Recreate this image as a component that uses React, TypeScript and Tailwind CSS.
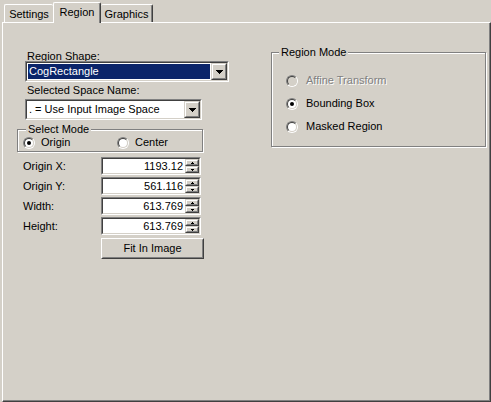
import React from 'react';

function Sunken({ className, children }: { className?: string; children?: React.ReactNode }) {
  return (
    <div className={`border border-t-[#808080] border-l-[#808080] border-b-white border-r-white ${className ?? ''}`}>
      <div className="flex h-full w-full border border-t-[#404040] border-l-[#404040] border-b-[#d4d0c8] border-r-[#d4d0c8]">
        {children}
      </div>
    </div>
  );
}

function Raised({ className, children }: { className?: string; children?: React.ReactNode }) {
  return (
    <div className={`border border-t-[#d4d0c8] border-l-[#d4d0c8] border-b-[#404040] border-r-[#404040] bg-[#d4d0c8] ${className ?? ''}`}>
      <div className="flex h-full w-full items-center justify-center border border-t-white border-l-white border-b-[#808080] border-r-[#808080]">
        {children}
      </div>
    </div>
  );
}

function DownArrow() {
  return (
    <svg width="7" height="4" viewBox="0 0 7 4" shapeRendering="crispEdges">
      <rect x="0" y="0" width="7" height="1" fill="#000" />
      <rect x="1" y="1" width="5" height="1" fill="#000" />
      <rect x="2" y="2" width="3" height="1" fill="#000" />
      <rect x="3" y="3" width="1" height="1" fill="#000" />
    </svg>
  );
}

function SmallArrow({ up }: { up?: boolean }) {
  return (
    <svg width="3" height="2" viewBox="0 0 3 2" shapeRendering="crispEdges">
      <rect x="1" y={up ? 0 : 1} width="1" height="1" fill="#000" />
      <rect x="0" y={up ? 1 : 0} width="3" height="1" fill="#000" />
    </svg>
  );
}

function Combo({ text, selected, className }: { text: string; selected?: boolean; className?: string }) {
  return (
    <Sunken className={`h-[21px] ${className ?? ''}`}>
      <div className="flex-1 bg-white p-[1px]">
        <div className={`h-full pl-[1px] leading-[15px] ${selected ? 'bg-[#0a246a] text-white' : ''}`}>{text}</div>
      </div>
      <Raised className="h-full w-[16px]">
        <DownArrow />
      </Raised>
    </Sunken>
  );
}

function Radio({ checked, disabled }: { checked?: boolean; disabled?: boolean }) {
  return (
    <span className="block h-[12px] w-[12px] shrink-0 rounded-full border border-t-[#808080] border-l-[#808080] border-b-white border-r-white">
      <span
        className={`flex h-full w-full items-center justify-center rounded-full border border-t-[#404040] border-l-[#404040] border-b-[#d4d0c8] border-r-[#d4d0c8] ${disabled ? 'bg-[#d4d0c8]' : 'bg-white'}`}
      >
        {checked && <span className="block h-[4px] w-[4px] rounded-full bg-black" />}
      </span>
    </span>
  );
}

function NumberRow({ label, value }: { label: string; value: string }) {
  return (
    <div className="flex h-[18px] items-center">
      <div className="w-[84px] pl-[6px]">{label}</div>
      <Sunken className="h-[18px] w-[100px]">
        <div className="flex-1 bg-white pr-[2px] text-right leading-[14px]">{value}</div>
        <div className="flex w-[14px] flex-col">
          <Raised className="h-[7px] w-full">
            <SmallArrow up />
          </Raised>
          <Raised className="h-[7px] w-full">
            <SmallArrow />
          </Raised>
        </div>
      </Sunken>
    </div>
  );
}

export default function App() {
  return (
    <div className="h-[402px] w-[491px] overflow-hidden bg-[#d4d0c8] font-['Liberation_Sans',Arial,sans-serif] text-[11px] leading-[13px] text-black">
      {/* tabs */}
      <div className="flex h-[22px] items-end pl-[2px]">
        <div className="ml-[2px] h-[18px] w-[49px] rounded-t-[2px] border-l border-t border-white pt-[3px] text-center">
          Settings
        </div>
        <div className="relative z-10 mb-[-1px] h-[21px] w-[48px] rounded-t-[2px] border-l border-t border-r border-l-white border-t-white border-r-[#404040] bg-[#d4d0c8] pt-[3px] text-center shadow-[inset_-1px_0_0_#808080]">
          Region
        </div>
        <div className="h-[18px] w-[52px] rounded-t-[2px] border-t border-r border-t-white border-r-[#404040] pt-[3px] text-center shadow-[inset_-1px_0_0_#808080]">
          Graphics
        </div>
      </div>

      {/* tab page */}
      <div className="ml-[2px] flex h-[380px] w-[489px] border border-t-white border-l-white border-b-[#404040] border-r-[#404040] shadow-[inset_-1px_-1px_0_#808080]">
        <div className="flex w-[202px] flex-col pl-[14px] pt-[27px]">
          <div className="pl-[10px]">Region Shape:</div>
          <Combo text="CogRectangle" selected className="ml-[8px] mt-[-2px] w-[204px]" />
          <div className="mt-[2px] pl-[10px]">Selected Space Name:</div>
          <Combo text=". = Use Input Image Space" className="ml-[8px] mt-[2px] w-[177px]" />

          <fieldset className="mt-[3px] w-[186px] border border-[#808080] shadow-[inset_1px_1px_0_#fff,1px_1px_0_#fff]">
            <legend className="ml-[8px] bg-[#d4d0c8] px-[2px]">Select Mode</legend>
            <div className="flex h-[13px] items-center pb-0 pl-[5px]">
              <div className="flex w-[94px] items-center gap-[6px]">
                <Radio checked />
                <span>Origin</span>
              </div>
              <div className="flex items-center gap-[6px]">
                <Radio />
                <span>Center</span>
              </div>
            </div>
            <div className="h-[2px]" />
          </fieldset>

          <div className="mt-[5px] flex flex-col gap-[2px]">
            <NumberRow label="Origin X:" value="1193.12" />
            <NumberRow label="Origin Y:" value="561.116" />
            <NumberRow label="Width:" value="613.769" />
            <NumberRow label="Height:" value="613.769" />
          </div>

          <div className="ml-[84px] mt-[3px] h-[21px] w-[103px] border border-t-white border-l-white border-b-[#404040] border-r-[#404040]">
            <div className="flex h-full w-full items-center justify-center border border-t-[#d4d0c8] border-l-[#d4d0c8] border-b-[#808080] border-r-[#808080]">
              Fit In Image
            </div>
          </div>
        </div>

        <fieldset className="ml-[66px] mt-[23px] h-[101px] w-[215px] border border-[#808080] shadow-[inset_1px_1px_0_#fff,1px_1px_0_#fff]">
          <legend className="ml-[7px] bg-[#d4d0c8] px-[2px]">Region Mode</legend>
          <div className="flex flex-col gap-[10px] pl-[14px] pt-[15px]">
            <div className="flex h-[13px] items-center gap-[8px]">
              <Radio disabled />
              <span className="text-[#808080] [text-shadow:1px_1px_0_#fff]">Affine Transform</span>
            </div>
            <div className="flex h-[13px] items-center gap-[8px]">
              <Radio checked />
              <span>Bounding Box</span>
            </div>
            <div className="flex h-[13px] items-center gap-[8px]">
              <Radio />
              <span>Masked Region</span>
            </div>
          </div>
        </fieldset>
      </div>
    </div>
  );
}
